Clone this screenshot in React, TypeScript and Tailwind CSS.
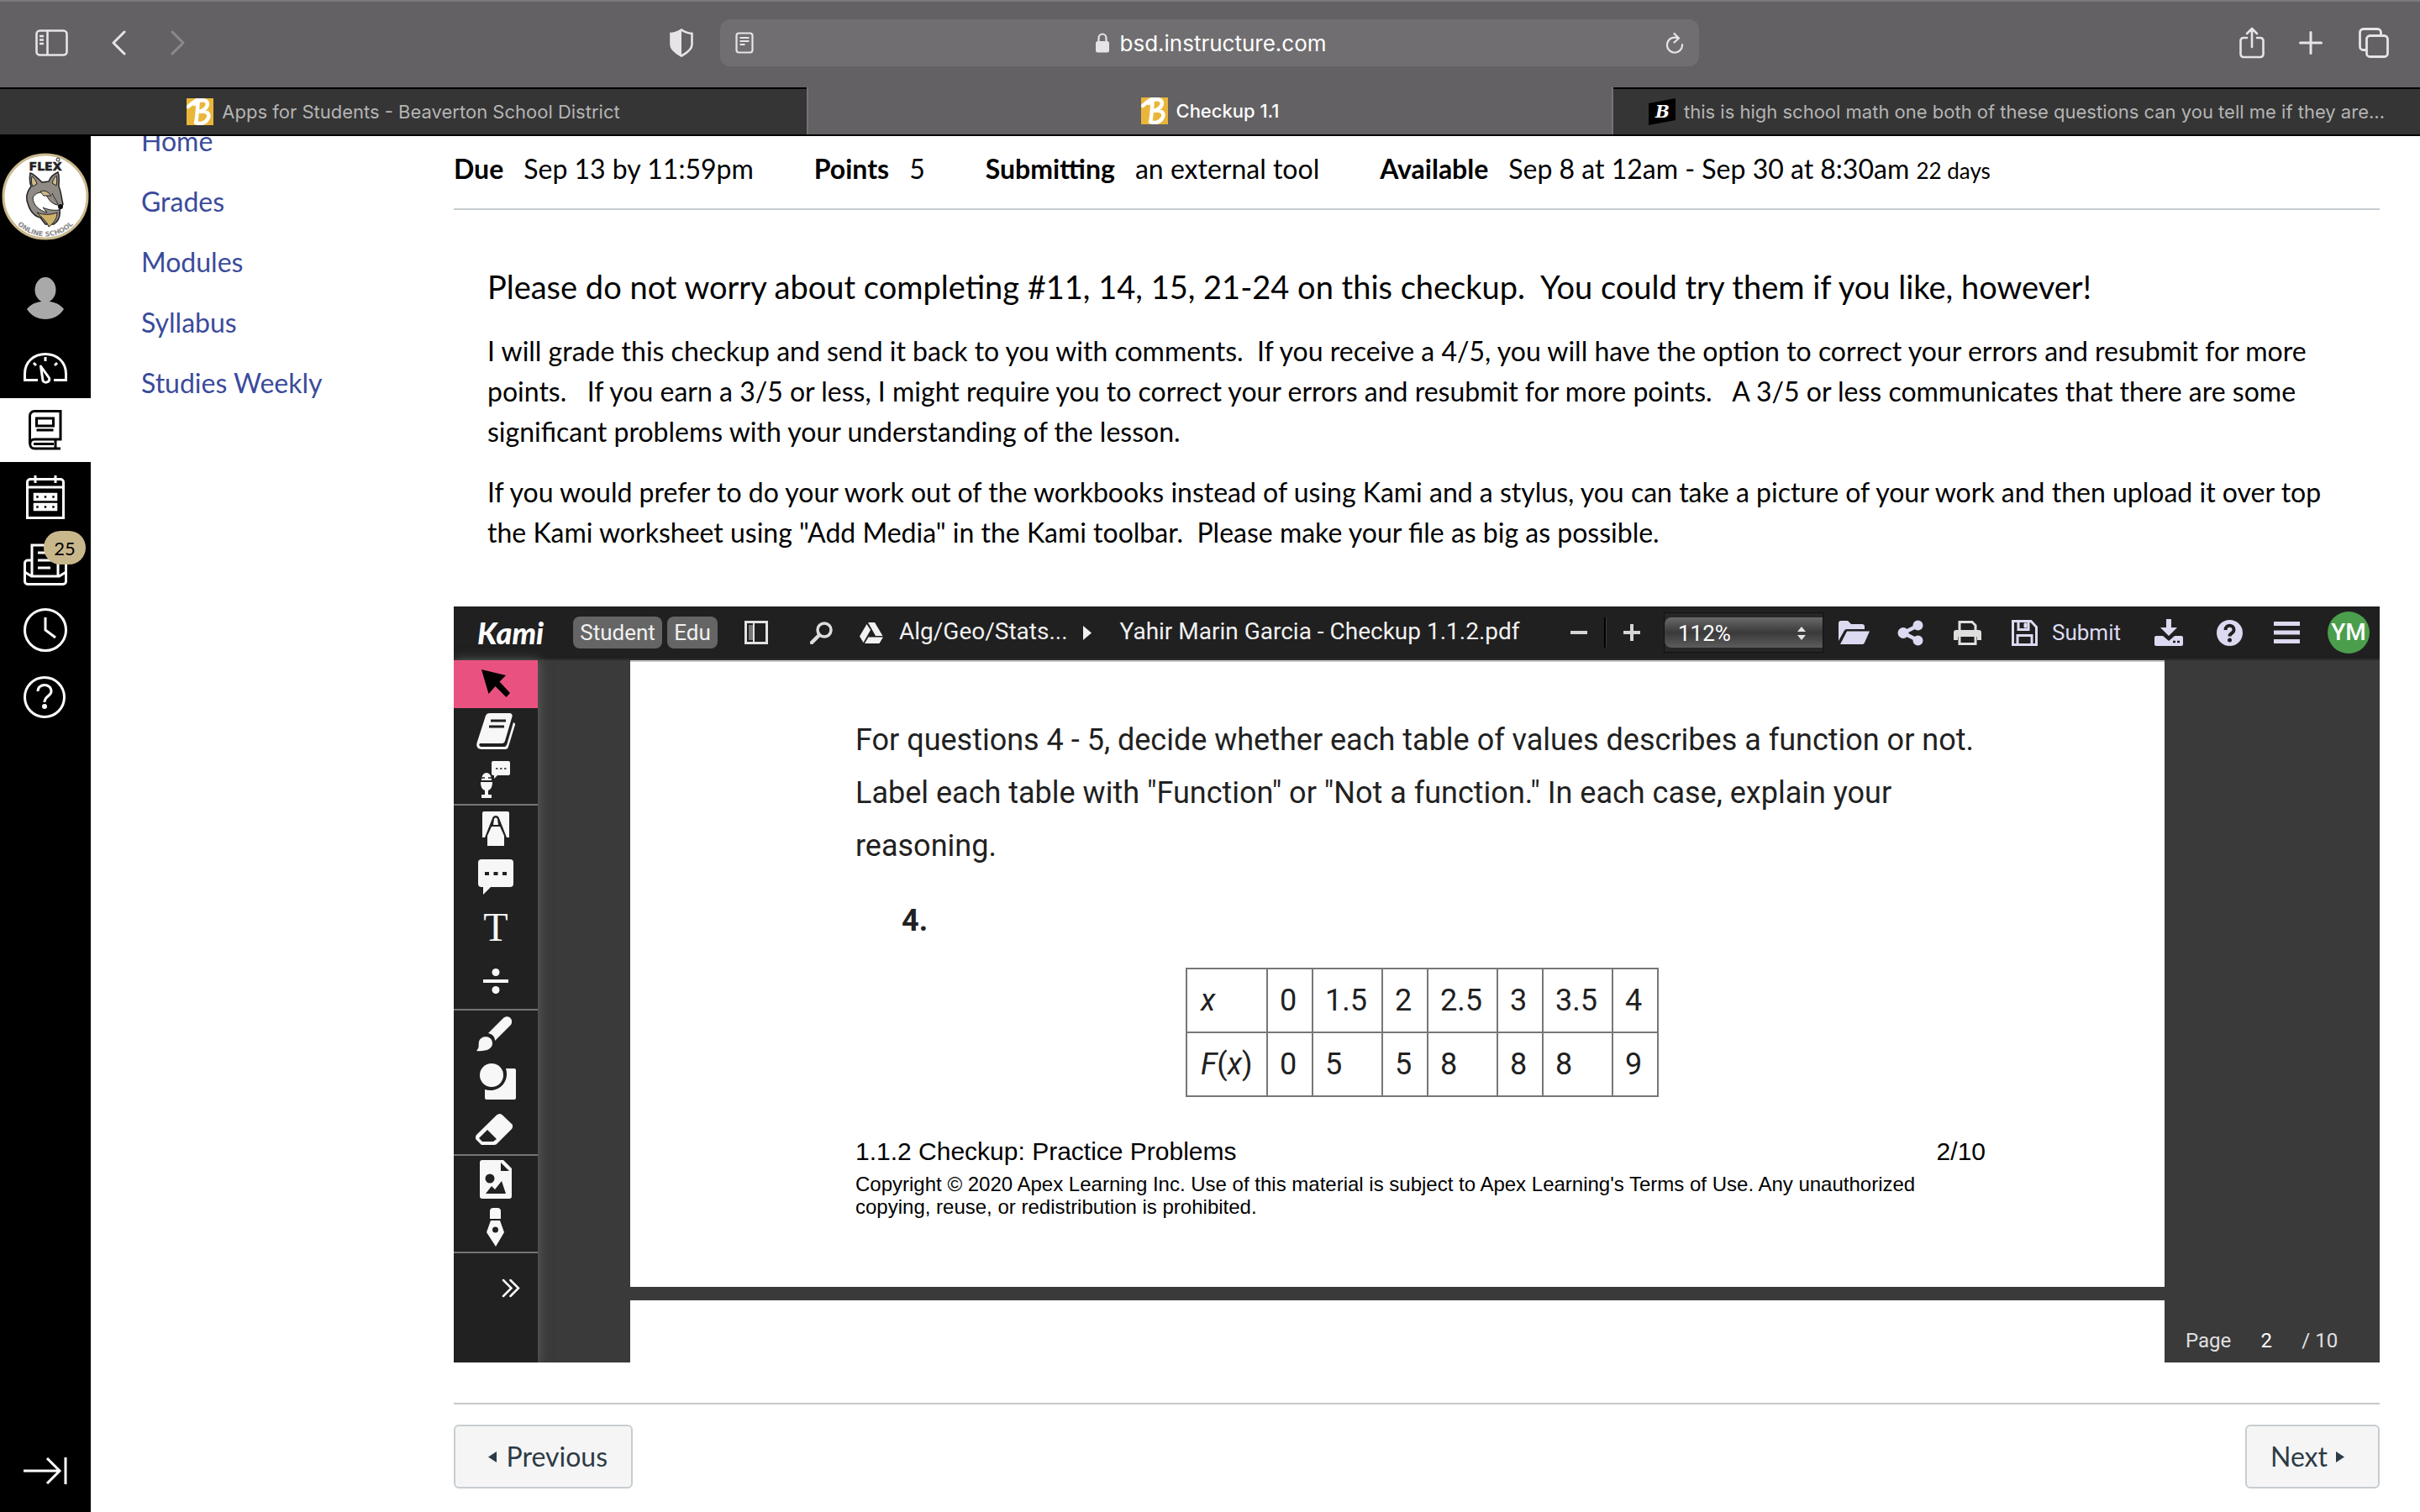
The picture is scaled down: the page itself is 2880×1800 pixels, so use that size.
import type { ReactNode } from "react";

const courseLinks = ["Home", "Grades", "Modules", "Syllabus", "Studies Weekly"];

const tableRows = [
  ["0", "1.5", "2", "2.5", "3", "3.5", "4"],
  ["0", "5", "5", "8", "8", "8", "9"],
];

function BeaverIcon() {
  return (
    <svg className="size-8 shrink-0" viewBox="0 0 32 32" aria-hidden="true">
      <rect width="32" height="32" fill="#e9b63a" />
      <path
        d="M2 10C7 5 12 3 15 0M14 1c-1 8-1 20-3 28M9 7c8-8 19-5 15 3-2 4-6 5-9 6 9-2 14 3 10 9-3 5-9 6-14 4"
        fill="none"
        stroke="#fff"
        strokeWidth="4.5"
        strokeLinecap="round"
      />
    </svg>
  );
}

function BrainlyIcon() {
  return (
    <svg className="size-8 shrink-0" viewBox="0 0 32 32" aria-hidden="true">
      <path d="M0 6 32 0v26L0 32z" fill="#000" />
      <text x="8" y="23" fontSize="20" fontWeight="bold" fontStyle="italic" fill="#fff" fontFamily="DejaVu Serif, serif">
        B
      </text>
    </svg>
  );
}

function BrowserToolbar() {
  return (
    <div className="flex h-[104px] items-center bg-[#636163] pb-0.5 pl-9 text-[#e6e4e6] shadow-[inset_0_2px_0_#7c7a7c]">
      <div className="flex flex-1 items-center">
        <button aria-label="Sidebar" className="ml-1.5">
          <svg width="39" height="32" viewBox="0 0 39 32" fill="none" stroke="currentColor" strokeWidth="2.6">
            <rect x="1.5" y="1.5" width="36" height="29" rx="4" />
            <path d="M14.500 2v28M5 8h5M5 12.500h5M5 17h5" />
          </svg>
        </button>
        <button aria-label="Back" className="ml-[51px]">
          <svg width="18" height="30" viewBox="0 0 18 30" fill="none" stroke="currentColor" strokeWidth="3" strokeLinecap="round" strokeLinejoin="round">
            <path d="M16 2 3 15l13 13" />
          </svg>
        </button>
        <button aria-label="Forward" className="ml-[53px] text-[#8b898b]">
          <svg width="18" height="30" viewBox="0 0 18 30" fill="none" stroke="currentColor" strokeWidth="3" strokeLinecap="round" strokeLinejoin="round">
            <path d="m2 2 13 13L2 28" />
          </svg>
        </button>
        <button aria-label="Privacy report" className="mr-8 ml-auto">
          <svg width="28" height="34" viewBox="0 0 28 34">
            <path d="M14 1.500c4 3 8 4 12.500 4.500v13c0 6-6 10-12.500 13.500C7.500 29 1.500 25 1.500 19V6C6 5.500 10 4.500 14 1.500z" fill="none" stroke="currentColor" strokeWidth="2.600" />
            <path d="M14 1.500v31C7.500 29 1.500 25 1.500 19V6C6 5.500 10 4.500 14 1.500z" fill="currentColor" />
          </svg>
        </button>
      </div>
      <div className="flex h-14 w-[1165px] items-center rounded-xl bg-[#706e70] px-[18px]">
        <button aria-label="Reader">
          <svg width="22" height="26" viewBox="0 0 22 26" fill="none" stroke="currentColor" strokeWidth="2.200">
            <rect x="1.500" y="1.500" width="19" height="23" rx="3" />
            <path d="M5.500 7h11M5.500 11h11M5.500 15h6" />
          </svg>
        </button>
        <div className="flex flex-1 items-center justify-center gap-3 pl-1">
          <svg width="18" height="24" viewBox="0 0 18 24" aria-hidden="true">
            <rect x="1" y="10" width="16" height="13.500" rx="2.500" fill="currentColor" />
            <path d="M4.500 11V6.500a4.500 5 0 0 1 9 0V11" fill="none" stroke="currentColor" strokeWidth="2.200" />
          </svg>
          <input
            aria-label="Address"
            defaultValue="bsd.instructure.com"
            className="w-[248px] bg-transparent text-[26px] text-white outline-none"
          />
        </div>
        <button aria-label="Reload">
          <svg width="22" height="26" viewBox="0 0 22 26" fill="none" stroke="currentColor" strokeWidth="2.200" strokeLinecap="round" strokeLinejoin="round">
            <path d="M15 7.500A9 9 0 1 0 20 15M10.500 2l5.500 5.500-5.500 5" />
          </svg>
        </button>
      </div>
      <div className="flex flex-1 items-center justify-end pr-[37px]">
        <button aria-label="Share">
          <svg width="30" height="38" viewBox="0 0 30 38" fill="none" stroke="currentColor" strokeWidth="2.600" strokeLinecap="round" strokeLinejoin="round">
            <path d="M9 13H5a3.500 3.500 0 0 0-3.500 3.500v16A3.500 3.500 0 0 0 5 36h20a3.500 3.500 0 0 0 3.500-3.500v-16A3.500 3.500 0 0 0 25 13h-4M15 24V2M9 8l6-6 6 6" />
          </svg>
        </button>
        <button aria-label="New tab" className="ml-[41px]">
          <svg width="28" height="28" viewBox="0 0 28 28" fill="none" stroke="currentColor" strokeWidth="3" strokeLinecap="round">
            <path d="M14 1.500v25M1.500 14h25" />
          </svg>
        </button>
        <button aria-label="Show tabs" className="ml-[43px]">
          <svg width="36" height="36" viewBox="0 0 36 36" fill="none" stroke="currentColor" strokeWidth="2.800">
            <path d="M9 26.500H5.500a4 4 0 0 1-4-4v-17a4 4 0 0 1 4-4h17a4 4 0 0 1 4 4V9" />
            <rect x="9.500" y="9.500" width="25" height="25" rx="4" />
          </svg>
        </button>
      </div>
    </div>
  );
}

function BrowserTabs() {
  return (
    <div className="grid h-[58px] grid-cols-3 border-b-2 border-black bg-[#353535] text-[22px] text-[#b4b4b4]">
      <button className="flex items-center justify-center gap-2.5 border-t-2 border-black">
        <BeaverIcon />
        Apps for Students - Beaverton School District
      </button>
      <button className="flex items-center justify-center gap-2.5 border-x-2 border-[#757375] bg-[#636163] font-medium text-white">
        <BeaverIcon />
        Checkup 1.1
      </button>
      <button className="flex items-center justify-center gap-2.5 border-t-2 border-black whitespace-nowrap">
        <BrainlyIcon />
        this is high school math one both of these questions can you tell me if they are...
      </button>
    </div>
  );
}

function SchoolLogo() {
  return (
    <svg width="104" height="104" viewBox="0 0 104 104" role="img" aria-label="Flex Online School">
      <circle cx="52" cy="52" r="50" fill="#fff" stroke="#c9b98d" strokeWidth="3" />
      <text x="52" y="21" textAnchor="middle" fontSize="14" fontWeight="900" fill="#222" stroke="#222" strokeWidth="0.600" fontFamily="DejaVu Sans, sans-serif">
        FLEX
      </text>
      <circle cx="67" cy="8" r="2" fill="none" stroke="#222" />
      <path d="M34 24c4 1 10 7 14 11l8-1c2-5 6-9 11-11 2 5 1 11 1 17 3 7 3 14 5 21l-4 7c1 8-1 13-7 17l-10 0-6-8c-9-2-13-10-15-17-3-8 0-15 4-20-2-5-2-10-1-16z" fill="#8f8b84" stroke="#222" strokeWidth="1.500" />
      <path d="M36 28c3 2 5 5 6 9l-5 3c-2-4-2-8-1-12zM65 27c1 4 1 8 0 12l-5-3c1-4 3-7 5-9z" fill="#cdb88a" stroke="#222" />
      <path d="M37 53c6-8 13-8 19 2 3 5 8 7 15 8l-3 5c-7 1-15-1-19-3l5 6c-9-2-17-9-17-18z" fill="#fff" stroke="#222" />
      <path d="M42 71c7 3 17 3 24 0 0 6-3 12-10 17-2-6-7-10-14-17z" fill="#cdb06a" stroke="#222" />
      <path d="M46 46c5-2 9 0 13 5l-9 0zM60 48c2 5 5 8 7 13" fill="#cdb88a" stroke="#222" />
      <circle cx="70" cy="64" r="3" fill="#111" />
      <path id="logo-arc" d="M16 82a46 46 0 0 0 72 0" fill="none" />
      <text fontSize="8" fontWeight="bold" fill="#8a8a8a" fontFamily="DejaVu Sans, sans-serif">
        <textPath href="#logo-arc" startOffset="50%" textAnchor="middle">
          ONLINE SCHOOL
        </textPath>
      </text>
    </svg>
  );
}

function GlobalNav() {
  const item = "flex h-20 w-full items-center justify-center";
  return (
    <nav aria-label="Global" className="flex w-[108px] shrink-0 flex-col items-center bg-black text-white">
      <a href="#home" className="flex h-[152px] items-center pb-2">
        <SchoolLogo />
      </a>
      <a href="#account" aria-label="Account" className="flex h-[82px] w-full items-center justify-center">
        <svg width="44" height="50" viewBox="0 0 44 50" fill="#a9a9a9">
          <ellipse cx="22" cy="15" rx="12.500" ry="15" />
          <path d="M17 26h10v3c8 1 13 4 17 9-5 8-13 12-22 12S5 46 0 38c4-5 9-8 17-9z" />
        </svg>
      </a>
      <a href="#dashboard" aria-label="Dashboard" className="flex h-[78px] w-full items-center justify-center pt-1.5">
        <svg width="52" height="38" viewBox="0 0 52 38" fill="none" stroke="currentColor" strokeWidth="3">
          <path d="M17 33.500H1.500V26C1.500 12 12 2.500 26 2.500S50.500 12 50.500 26v7.500H36M26 6v5M12 13l3 3M40 13l-3 3" />
          <path d="m20.500 17 10 14c2 5-6 7-7.500 3z" strokeLinejoin="round" />
        </svg>
      </a>
      <a href="#courses" aria-label="Courses" className="flex h-[76px] w-full items-center justify-center bg-white text-black">
        <svg width="40" height="48" viewBox="0 0 40 48" fill="none" stroke="currentColor" strokeWidth="3">
          <path d="M38 46H7c-7 0-7-11 0-11h31V1.500H7A5.500 5.500 0 0 0 1.500 7v33M32 36v10M6 40.500h24" />
          <path d="M9.500 10h20v9h-20zM9.500 24h20" />
        </svg>
      </a>
      <a href="#calendar" aria-label="Calendar" className={`${item} pt-1`}>
        <svg width="46" height="52" viewBox="0 0 46 52" fill="none" stroke="currentColor" strokeWidth="3">
          <path d="M1.500 50.500V8A3.500 3.500 0 0 1 5 4.500h36A3.500 3.500 0 0 1 44.500 8v42.500zM1.500 14h43M11 0v9M35 0v9" />
          <path d="M10.500 22.500h6v6h-6zM20 22.500h6v6h-6zM29.500 22.500h6v6h-6zM10.500 34.500h6v6h-6zM20 34.500h6v6h-6zM29.500 34.500h6v6h-6z" strokeWidth="3.500" />
        </svg>
      </a>
      <a href="#inbox" aria-label="Inbox, 25 unread" className="relative flex h-20 w-full items-center justify-center pt-1">
        <svg width="52" height="50" viewBox="0 0 52 50" fill="none" stroke="currentColor" strokeWidth="3">
          <path d="M10 38V2h31v36M10 20H5a3.500 3.500 0 0 0-3.500 3.500V45A3.500 3.500 0 0 0 5 48.500h42a3.500 3.500 0 0 0 3.500-3.500V23.500A3.500 3.500 0 0 0 47 20h-6M1.500 34l8 5h33l8-5M17 11h18M17 20h18M17 29h15" />
        </svg>
        <span className="absolute top-0.5 right-1.5 flex h-10 w-[50px] items-center justify-center rounded-full bg-[#c9b78c] font-[Lato,sans-serif] text-[22px] text-black">
          25
        </span>
      </a>
      <a href="#history" aria-label="History" className={item}>
        <svg width="52" height="52" viewBox="0 0 52 52" fill="none" stroke="currentColor" strokeWidth="3">
          <circle cx="26" cy="26" r="24.500" />
          <path d="M26 11v15l12 9" />
        </svg>
      </a>
      <a href="#help" aria-label="Help" className={`${item} pr-0.5`}>
        <svg width="50" height="50" viewBox="0 0 50 50" fill="none" stroke="currentColor" strokeWidth="3">
          <circle cx="25" cy="25" r="23.500" />
          <path d="M17 18c0-10 16-10 16 0 0 6-8 5-8 13" />
          <circle cx="25" cy="36" r="1.500" fill="currentColor" />
        </svg>
      </a>
      <button aria-label="Collapse navigation" className="mt-auto mb-8">
        <svg width="52" height="34" viewBox="0 0 52 34" fill="none" stroke="currentColor" strokeWidth="3">
          <path d="M0 17h42M28 2l15 15-15 15M50 1v32" />
        </svg>
      </button>
    </nav>
  );
}

function KamiHeader() {
  return (
    <header className="flex h-16 items-center border-b-2 border-[#2c2b2c] bg-[#202020] pr-3 pl-7 font-[Roboto,sans-serif] text-[28px] text-[#f1f1f1]">
      <span className="w-[114px] font-[Lato,sans-serif] text-[36px] font-black text-white italic">Kami</span>
      <span className="flex h-[38px] w-[106px] items-center justify-center rounded-lg bg-[#656565] text-[26px]">Student</span>
      <span className="ml-1.5 flex h-[38px] w-[60px] items-center justify-center rounded-lg bg-[#656565] text-[26px]">Edu</span>
      <button aria-label="Thumbnails" className="ml-8">
        <svg width="28" height="28" viewBox="0 0 28 28">
          <rect x="1.500" y="1.500" width="25" height="25" fill="none" stroke="#e2e2e2" strokeWidth="3" />
          <path d="M5 5h5v18H5z" fill="#777" />
          <path d="M11 3v22" stroke="#e2e2e2" strokeWidth="2" />
        </svg>
      </button>
      <button aria-label="Search" className="ml-[50px]">
        <svg width="27" height="27" viewBox="0 0 27 27" fill="none" stroke="#ddd">
          <circle cx="17" cy="10" r="8" strokeWidth="3.500" />
          <path d="m11 16-9 9" strokeWidth="4.500" strokeLinecap="round" />
        </svg>
      </button>
      <svg className="ml-8" width="28" height="25" viewBox="0 0 28 25" fill="#f1f1f1" aria-hidden="true">
        <path d="M10 0h8l9.500 16h-8.500zM8.500 2 13 9 4.500 24 0 16.500zM10.500 17.500H28L23.500 25H6z" />
      </svg>
      <a href="#folder" className="ml-[19px] pb-0.5">Alg/Geo/Stats...</a>
      <svg className="ml-[18px]" width="10" height="17" viewBox="0 0 10 17" fill="#f1f1f1" aria-hidden="true">
        <path d="m0 0 10 8.500L0 17z" />
      </svg>
      <h2 className="ml-[34px] pb-0.5 whitespace-nowrap">Yahir Marin Garcia - Checkup 1.1.2.pdf</h2>

      <div className="ml-auto flex items-center text-[#dcdaf0]">
        <button aria-label="Zoom out">
          <svg width="20" height="20" viewBox="0 0 20 20">
            <path d="M0 10h20" stroke="#d5d5d5" strokeWidth="4" />
          </svg>
        </button>
        <span className="ml-5 h-9 w-0.5 bg-black shadow-[1px_0_0_#3c3c3c]" />
        <button aria-label="Zoom in" className="ml-[21px]">
          <svg width="20" height="20" viewBox="0 0 20 20">
            <path d="M0 10h20M10 0v20" stroke="#d5d5d5" strokeWidth="4" />
          </svg>
        </button>
        <div className="relative ml-7 flex h-12 w-[190px] items-center border border-[#111] bg-[#262626]">
          <select
            aria-label="Zoom level"
            className="h-9 w-full appearance-none rounded-l-lg bg-linear-to-b from-[#6a6a6a] via-[#3a3a3a] to-[#5c5c5c] pl-4 text-[26px] text-white"
          >
            <option>112%</option>
          </select>
          <svg className="pointer-events-none absolute top-4 right-5" width="10" height="16" viewBox="0 0 10 16" fill="#e5e5e5">
            <path d="m5 0 5 6H0zM0 10h10l-5 6z" />
          </svg>
        </div>
        <button aria-label="Open" className="ml-[18px]">
          <svg width="37" height="28" viewBox="0 0 37 28" fill="currentColor">
            <path d="M0 3a3 3 0 0 1 3-3h8l4 4h13a3 3 0 0 1 3 3v3H10a4 4 0 0 0-3.500 2.300L0 24z" />
            <path d="M10 12.500h27l-6 13.500a3 3 0 0 1-2.500 2H2z" />
          </svg>
        </button>
        <button aria-label="Share document" className="ml-[33px]">
          <svg width="31" height="31" viewBox="0 0 31 31" fill="currentColor">
            <circle cx="7" cy="15.500" r="6.500" />
            <circle cx="24.500" cy="6.500" r="6" />
            <circle cx="24.500" cy="24.500" r="6" />
            <path d="M24 7 7 15.500 24 24" fill="none" stroke="currentColor" strokeWidth="4.500" />
          </svg>
        </button>
        <button aria-label="Print" className="ml-9 text-[#dededd]">
          <svg width="33" height="29" viewBox="0 0 33 29">
            <path d="M7 11V1.500h15l4 4V11" fill="none" stroke="currentColor" strokeWidth="3" />
            <path d="M3 11h27a3 3 0 0 1 3 3v9h-5v-4H5v4H0v-9a3 3 0 0 1 3-3z" fill="currentColor" />
            <path d="M7 19v8.500h19V19" fill="none" stroke="currentColor" strokeWidth="3" />
          </svg>
        </button>
        <button className="ml-9 flex items-center gap-[17px] text-[26px]">
          <svg width="31" height="31" viewBox="0 0 31 31" fill="none" stroke="currentColor" strokeWidth="3">
            <path d="M1.500 1.500H23l6.500 7v21h-28zM8 2v9.500h12V2M7 29V18.500h17V29" />
            <path d="M15 4h3v5h-3z" fill="currentColor" strokeWidth="1" />
          </svg>
          Submit
        </button>
        <button aria-label="Download" className="ml-10">
          <svg width="34" height="32" viewBox="0 0 34 32" fill="currentColor">
            <path d="M14 0h6v10h7L17 20 7 10h7z" />
            <path d="M0 22a2 2 0 0 1 2-2h8l7 6 7-6h8a2 2 0 0 1 2 2v8a2 2 0 0 1-2 2H2a2 2 0 0 1-2-2z" />
            <path d="M22 27h3M27 27h3" stroke="#202020" strokeWidth="2.500" />
          </svg>
        </button>
        <button aria-label="Kami help" className="ml-10">
          <svg width="31" height="31" viewBox="0 0 31 31">
            <circle cx="15.500" cy="15.500" r="15.500" fill="currentColor" />
            <path d="M10.500 12c0-7 10-7 10 0 0 4-5 3.500-5 7.500" fill="none" stroke="#202020" strokeWidth="4" />
            <circle cx="15.500" cy="24" r="2.500" fill="#202020" />
          </svg>
        </button>
        <button aria-label="Menu" className="ml-[37px]">
          <svg width="31" height="26" viewBox="0 0 31 26" stroke="currentColor" strokeWidth="5">
            <path d="M0 2.500h31M0 13h31M0 23.500h31" />
          </svg>
        </button>
        <button className="ml-[33px] size-[50px] rounded-full bg-[#4b9e4c] text-[28px] font-medium text-white">YM</button>
      </div>
    </header>
  );
}

function Tool({ label, tall, active, children }: { label: string; tall?: boolean; active?: boolean; children: ReactNode }) {
  return (
    <button
      aria-label={label}
      className={`flex w-full items-center justify-center pb-0.5 ${tall ? "h-16" : "h-[57px]"} ${active ? "bg-[#e95280] text-black" : ""}`}
    >
      {children}
    </button>
  );
}

function KamiTools() {
  return (
    <div className="z-10 w-[100px] shrink-0 bg-[#212121] text-[#f7f7f7] shadow-[2px_0_12px_#5c5c5c]">
      <Tool label="Select" active>
        <svg width="34" height="34" viewBox="0 0 34 34" fill="currentColor">
          <path d="m0 0 29 7-7.500 7.500L34 28l-4.500 5L16.500 20 8.500 29z" />
        </svg>
      </Tool>
      <Tool label="Dictionary">
        <svg width="46" height="43" viewBox="0 0 46 43">
          <path d="M16 0h24a3 3 0 0 1 2.500 4L34 33a4 4 0 0 1-4 3H4l-1 2 2 2h29l2-2 8-27c3 1 2 3 1 6l-7 23a4 4 0 0 1-4 3H6c-5 0-7-4-5-9L11 3c1-2 2-3 5-3z" fill="currentColor" />
          <path d="M17 9h18M15 16h18" stroke="#212121" strokeWidth="3" />
        </svg>
      </Tool>
      <Tool label="Voice comment">
        <svg width="36" height="44" viewBox="0 0 36 44" fill="currentColor">
          <path d="M15 0h18a2 2 0 0 1 2 2v13a2 2 0 0 1-2 2H20l-4 4v-4h-1a2 2 0 0 1-2-2V2a2 2 0 0 1 2-2zM0 25h14c0 6-2 9-5 10v5h4v4H1v-4h4v-5c-3-1-5-4-5-10zM1 23c0-12 12-12 12 0z" />
          <path d="M18 9h2.500M23 9h2.500M28 9h2.500M0 20h5M9 20h5M0 24h14" stroke="#212121" strokeWidth="1.500" />
        </svg>
      </Tool>
      <div className="h-0.5 bg-[#757575]" />
      <Tool label="Markup">
        <svg width="32" height="41" viewBox="0 0 32 41">
          <path d="M2 0h28a2 2 0 0 1 2 2v29h-3L20 8c-1-4-7-4-8 0L3 31H0V2a2 2 0 0 1 2-2z" fill="currentColor" />
          <path d="M6 41V29l5-11h10l5 11v12zM13 16l1-7c1-2 3-2 4 0l1 7z" fill="currentColor" />
        </svg>
      </Tool>
      <Tool label="Comment">
        <svg width="42" height="42" viewBox="0 0 42 42">
          <path d="M4 0h34a4 4 0 0 1 4 4v25a4 4 0 0 1-4 4H15l-9 9v-9H4a4 4 0 0 1-4-4V4a4 4 0 0 1 4-4z" fill="currentColor" />
          <path d="M8 17h5M18.500 17h5M29 17h5" stroke="#212121" strokeWidth="4" />
        </svg>
      </Tool>
      <Tool label="Text" tall>
        <span className="font-['Liberation_Serif',serif] text-[48px] leading-none">T</span>
      </Tool>
      <Tool label="Equation" tall>
        <svg width="30" height="30" viewBox="0 0 30 30" fill="currentColor">
          <circle cx="15" cy="4.500" r="4.500" />
          <path d="M0 13h30v4H0z" />
          <circle cx="15" cy="25.500" r="4.500" />
        </svg>
      </Tool>
      <div className="h-0.5 bg-[#757575]" />
      <Tool label="Draw">
        <svg className="mr-1" width="42" height="42" viewBox="0 0 42 42" fill="currentColor">
          <path d="M14 20 32 2c6-5 13 2 9 8L22 29c0-5-3-8-8-9z" />
          <path d="M0 41c4-4 2-6 3-11 2-8 16-8 16 2 0 7-8 10-19 9z" />
        </svg>
      </Tool>
      <Tool label="Shapes">
        <svg className="ml-1" width="43" height="43" viewBox="0 0 43 43" fill="currentColor">
          <circle cx="14" cy="14" r="14" />
          <path d="M31 6h10a2 2 0 0 1 2 2v33a2 2 0 0 1-2 2H8a2 2 0 0 1-2-2V31c16 5 30-9 25-25z" />
        </svg>
      </Tool>
      <Tool label="Eraser">
        <svg className="mr-1" width="44" height="37" viewBox="0 0 44 37">
          <path d="M25 1.500c3-2 5-2 7 0L43 12c2 2 1 4 0 6L26 35c-1 1-2 2-4 2H7L1 31c-2-2-1-4 0-6z" fill="currentColor" />
          <path d="m14 19 11 11-4 3H8l-4-4z" fill="#212121" />
        </svg>
      </Tool>
      <div className="h-0.5 bg-[#757575]" />
      <Tool label="Add media">
        <svg width="38" height="46" viewBox="0 0 38 46">
          <path d="M3 0h25l10 10v33a3 3 0 0 1-3 3H3a3 3 0 0 1-3-3V3a3 3 0 0 1 3-3z" fill="currentColor" />
          <path d="M25 3v10h10zM7 40l7-9 4 4 8-10 5 15z" fill="#212121" />
          <circle cx="12" cy="22" r="5.500" fill="#212121" />
        </svg>
      </Tool>
      <Tool label="Signature">
        <svg width="22" height="46" viewBox="0 0 22 46">
          <path d="M4 13V4a4 4 0 0 1 4-4h5a4 4 0 0 1 4 4v9zM5 15h11l5 14-10 17L0 29z" fill="currentColor" />
          <circle cx="10.500" cy="26" r="3.500" fill="#212121" />
        </svg>
      </Tool>
      <div className="h-0.5 bg-[#757575]" />
      <button aria-label="Expand toolbar" className="mt-[30px] ml-[57px] block">
        <svg width="22" height="23" viewBox="0 0 22 23" fill="none" stroke="currentColor" strokeWidth="2.500" strokeLinecap="round">
          <path d="m2 2 9.500 9.500L2 21M10.500 2l9.500 9.500-9.500 9.500" />
        </svg>
      </button>
    </div>
  );
}

function Worksheet() {
  return (
    <article className="h-[746px] bg-white pt-16 pr-[213px] pl-[268px] font-[Roboto,sans-serif] text-[36px] leading-[63px] text-[#212121] shadow-[inset_0_2px_0_#c9c7c9]">
      <p className="whitespace-nowrap">
        For questions 4 - 5, decide whether each table of values describes a function or not.
        <br />
        Label each table with "Function" or "Not a function." In each case, explain your
        <br />
        reasoning.
      </p>
      <p className="mt-[26px] pl-[55px] font-bold">4.</p>
      <table className="mt-6 ml-[393px] border-collapse leading-none">
        <tbody>
          {tableRows.map((row, i) => (
            <tr key={i} className="h-[76px]">
              <th scope="row" className="w-24 border-2 border-[#777] pl-4 text-left font-normal">
                {i === 0 ? <i>x</i> : <><i>F</i>(<i>x</i>)</>}
              </th>
              {row.map((value, j) => (
                <td key={j} className={`border-2 border-[#777] pl-3.5 ${j % 2 ? "w-[83px]" : "w-[54px]"}`}>
                  {value}
                </td>
              ))}
            </tr>
          ))}
        </tbody>
      </table>
      <footer className="mt-[46px] font-['Liberation_Sans',sans-serif] text-black">
        <div className="flex justify-between text-[30px] leading-[38px]">
          <span>1.1.2 Checkup: Practice Problems</span>
          <span>2/10</span>
        </div>
        <p className="mt-1.5 text-[24px] leading-[27px] whitespace-nowrap">
          Copyright © 2020 Apex Learning Inc. Use of this material is subject to Apex Learning's Terms of Use. Any unauthorized
          <br />
          copying, reuse, or redistribution is prohibited.
        </p>
      </footer>
    </article>
  );
}

function KamiViewer() {
  return (
    <section aria-label="Kami" className="mt-16 overflow-hidden bg-[#3a3a3a]">
      <KamiHeader />
      <div className="flex">
        <KamiTools />
        <div className="ml-[110px] flex h-[836px] flex-1 flex-col gap-4">
          <Worksheet />
          <div className="flex-1 bg-white" />
        </div>
        <div className="flex w-64 flex-col justify-end px-[25px] pb-2 font-[Roboto,sans-serif] text-[24px] text-[#e0e0e0]">
          <label className="flex items-center">
            Page
            <input defaultValue="2" className="ml-[22px] w-10 text-center text-white outline-none" />
            <span className="ml-[22px]">/ 10</span>
          </label>
        </div>
      </div>
    </section>
  );
}

function Detail({ label, children }: { label: string; children: ReactNode }) {
  return (
    <li className="flex items-baseline gap-6">
      <b>{label}</b>
      <span>{children}</span>
    </li>
  );
}

export default function App() {
  return (
    <div className="flex min-h-screen flex-col bg-white font-[Inter,sans-serif]">
      <BrowserToolbar />
      <BrowserTabs />
      <div className="flex flex-1 font-[Lato,sans-serif] text-[32px] text-black">
        <GlobalNav />
        <nav aria-label="Course" className="w-[432px] shrink-0 overflow-hidden pl-[60px] text-[#3b4b9b]">
          <ul className="-mt-[30px]">
            {courseLinks.map((link) => (
              <li key={link} className="flex h-[72px] items-center">
                <a href="#course">{link}</a>
              </li>
            ))}
          </ul>
        </nav>
        <main className="min-w-0 flex-1 pr-12">
          <ul className="flex h-[88px] items-center gap-[72px] border-b-2 border-[#c7cdd1] pb-2 whitespace-nowrap">
            <Detail label="Due">Sep 13 by 11:59pm</Detail>
            <Detail label="Points">5</Detail>
            <Detail label="Submitting">an external tool</Detail>
            <Detail label="Available">
              Sep 8 at 12am - Sep 30 at 8:30am <small className="text-[26px]">22 days</small>
            </Detail>
          </ul>
          <div className="px-10 pt-[62px] leading-[48px]">
            <h1 className="text-[38px] leading-[58px]">
              Please do not worry about completing #11, 14, 15, 21-24 on this checkup.&nbsp; You could try them if you like, however!
            </h1>
            <p className="mt-6">
              I will grade this checkup and send it back to you with comments.&nbsp; If you receive a 4/5, you will have the option to correct your errors and resubmit for more points.&nbsp;&nbsp; If you earn a 3/5 or less, I might require you to correct your errors and resubmit for more points.&nbsp;&nbsp; A 3/5 or less communicates that there are some significant problems with your understanding of the lesson.
            </p>
            <p className="mt-6">
              If you would prefer to do your work out of the workbooks instead of using Kami and a stylus, you can take a picture of your work and then upload it over top the Kami worksheet using "Add Media" in the Kami toolbar.&nbsp; Please make your file as big as possible.
            </p>
          </div>
          <KamiViewer />
          <div className="mt-12 flex justify-between border-t-2 border-[#c7c9cb] pt-6 pb-7 text-[#2d3b45]">
            <a href="#previous" className="flex h-[76px] w-[213px] items-center justify-end gap-3 rounded-md border-2 border-[#c7cdd1] bg-[#f5f5f5] pr-7">
              <svg width="10" height="13" viewBox="0 0 10 13" fill="currentColor" aria-hidden="true">
                <path d="M10 0v13L0 6.500z" />
              </svg>
              Previous
            </a>
            <a href="#next" className="flex h-[76px] w-40 items-center gap-2.5 rounded-md border-2 border-[#c7cdd1] bg-[#f5f5f5] pl-7">
              Next
              <svg width="10" height="13" viewBox="0 0 10 13" fill="currentColor" aria-hidden="true">
                <path d="m0 0 10 6.500L0 13z" />
              </svg>
            </a>
          </div>
        </main>
      </div>
    </div>
  );
}
